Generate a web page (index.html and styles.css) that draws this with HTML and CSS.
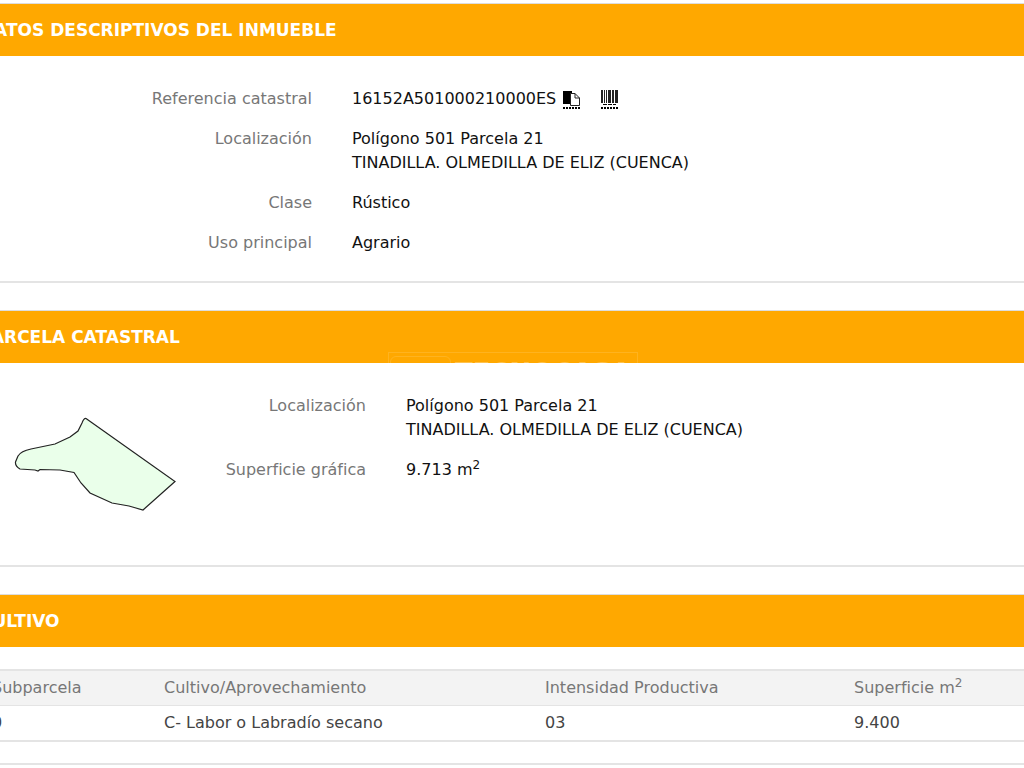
FILE: index.html
```html
<!DOCTYPE html>
<html lang="es">
<head>
  <meta charset="utf-8">
  <title>Datos descriptivos del inmueble</title>
  <meta name="viewport" content="width=device-width, initial-scale=1.0">
  <link rel="stylesheet" href="styles.css">
</head>
<body>
  <main class="page">
    <section class="panel">
      <h2 class="panel-heading">DATOS DESCRIPTIVOS DEL INMUEBLE</h2>
      <dl class="data-list">
        <dt>Referencia catastral</dt>
        <dd class="reference">
          <span>16152A501000210000ES</span>
          <button type="button" class="icon-btn" aria-label="Copiar">
            <svg width="18" height="20" viewBox="0 0 18 20">
              <path d="M0 2h9v3H7v10H0z" fill="#000"/>
              <path d="M7.500 4.500h4.500l4.500 4.500v7.500h-9z" fill="#fff" stroke="#222"/>
              <path d="M12 4.500v4.500h4.500" fill="none" stroke="#222"/>
              <path d="M0 19h17" stroke="#000" stroke-width="2" stroke-dasharray="2 1"/>
            </svg>
          </button>
          <button type="button" class="icon-btn" aria-label="Código de barras">
            <svg width="18" height="20" viewBox="0 0 18 20">
              <path d="M0 1h2v13H0zM3 1h1v13H3zM5 1h1v13H5zM7 1h3v13H7zM11 1h2v13h-2zM14 1h3v13h-3z" fill="#222"/>
              <path d="M2 15.500h4m1 0h4m1 0h3" stroke="#000"/>
              <path d="M0 19h17" stroke="#000" stroke-width="2" stroke-dasharray="2 1"/>
            </svg>
          </button>
        </dd>
        <dt>Localización</dt>
        <dd>Polígono 501 Parcela 21<br>TINADILLA. OLMEDILLA DE ELIZ (CUENCA)</dd>
        <dt>Clase</dt>
        <dd>Rústico</dd>
        <dt>Uso principal</dt>
        <dd>Agrario</dd>
      </dl>
    </section>

    <section class="panel">
      <h2 class="panel-heading">PARCELA CATASTRAL
        <span class="watermark" aria-hidden="true">
          <span class="watermark-logo"></span>
          <span class="watermark-name">TECNOCASA</span>
        </span>
      </h2>
      <div class="parcel">
        <svg class="parcel-map" width="164" height="96" viewBox="13 416 164 96" role="img" aria-label="Parcela">
          <path d="M86 418.500L175 481.500L143 510L129 506L112 503L90 493L81 483L74 472.500L60 470L40 469.500L38 471L35 470L20 469Q15 466 15.500 462L18 456Q21 451 31 449L55 444L70 437L78 431L82 423Q84 418 86 418.500Z"
            fill="#eaffea" stroke="#222" stroke-width="1.200"/>
        </svg>
        <dl class="data-list parcel-data">
          <dt>Localización</dt>
          <dd>Polígono 501 Parcela 21<br>TINADILLA. OLMEDILLA DE ELIZ (CUENCA)</dd>
          <dt>Superficie gráfica</dt>
          <dd>9.713 m<sup>2</sup></dd>
        </dl>
      </div>
    </section>

    <section class="panel">
      <h2 class="panel-heading">CULTIVO</h2>
      <table class="crops">
        <thead>
          <tr>
            <th class="col-sub">Subparcela</th>
            <th class="col-crop">Cultivo/Aprovechamiento</th>
            <th class="col-int">Intensidad Productiva</th>
            <th>Superficie m<sup>2</sup></th>
          </tr>
        </thead>
        <tbody>
          <tr>
            <td>0</td>
            <td>C- Labor o Labradío secano</td>
            <td>03</td>
            <td>9.400</td>
          </tr>
        </tbody>
      </table>
    </section>
  </main>
</body>
</html>
```
FILE: styles.css
```css
* {
  box-sizing: border-box;
}

body {
  margin: 0;
  background: #fff;
  color: #111;
  font-family: Verdana, "DejaVu Sans", sans-serif;
  font-size: 16px;
  line-height: 24px;
  overflow-x: hidden;
}

.page {
  margin: 0 -31px;
  padding-top: 3px;
}

.panel {
  border: 1px solid #ddd;
  border-bottom: 2px solid #e4e4e4;
  margin-bottom: 27px;
}

.panel:last-child {
  margin-bottom: 0;
}

.panel-heading {
  position: relative;
  margin: 0;
  padding: 14px 10px;
  background: #ffa800;
  color: #fff;
  font-size: 17px;
  font-weight: bold;
  line-height: 24px;
}

.data-list {
  display: grid;
  grid-template-columns: 342px 1fr;
  gap: 16px 40px;
  margin: 0;
  padding: 31px 0 26px;
}

.data-list dt {
  color: #777;
  text-align: right;
}

.data-list dd {
  margin: 0;
}

.reference {
  display: flex;
  align-items: center;
}

.icon-btn {
  height: 20px;
  margin: 0 13px 0 7px;
  padding: 0;
  border: none;
  background: none;
  cursor: pointer;
}

.icon-btn svg {
  display: block;
}

sup {
  font-size: 12px;
  line-height: 0;
}

/* parcel drawing next to its data */
.parcel {
  display: flex;
  align-items: flex-start;
  padding: 31px 0 53px 43px;
}

.parcel-map {
  flex: none;
  margin-top: 22px;
}

.parcel-data {
  flex: 1;
  grid-template-columns: 189px 1fr;
  padding: 0;
}

.watermark {
  position: absolute;
  left: 418px;
  bottom: 0;
  display: flex;
  gap: 4px;
  width: 250px;
  height: 11px;
  padding: 3px 0 0 1px;
  overflow: hidden;
  border: 1px solid #ffb31f;
  border-bottom: none;
}

.watermark-logo {
  width: 61px;
  height: 20px;
  border: 1px solid #ffb31f;
  border-radius: 6px;
}

.watermark-name {
  color: #ffc24d;
  font-size: 26px;
  line-height: 34px;
}

.crops {
  width: 100%;
  margin: 22px 0 21px;
  border-collapse: collapse;
  border-top: 2px solid #e4e4e4;
  border-bottom: 2px solid #e4e4e4;
  color: #444;
}

.crops th,
.crops td {
  padding: 5px 22px;
  text-align: left;
  font-weight: normal;
}

.crops th {
  background: #f3f3f3;
  border-bottom: 1px solid #e4e4e4;
  color: #777;
}

.col-sub {
  width: 172px;
}

.col-crop {
  width: 381px;
}

.col-int {
  width: 309px;
}
```
